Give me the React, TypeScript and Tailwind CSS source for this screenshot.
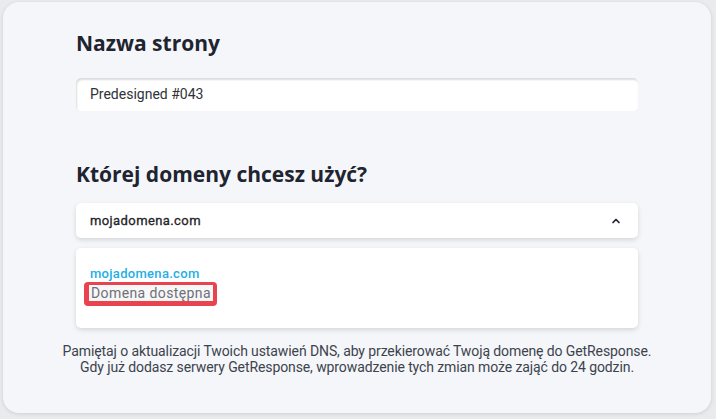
import { ChevronUp } from "lucide-react"

export default function App() {
  return (
    <div className="min-h-[419px] w-[716px] bg-[#e9ebef] pt-[2px] pl-[3px] pr-[5px] pb-[6px]">
      <div
        className="flex h-[411px] flex-col rounded-[16px] bg-[#f4f6f9] px-[73px] pt-[26px] shadow-[0_1px_4px_rgba(0,0,0,0.12)]"
        style={{ fontFamily: "Roboto, 'Liberation Sans', sans-serif" }}
      >
        <h1 className="font-['Open_Sans',sans-serif] text-[21px] font-bold leading-[30px] text-[#1e2430]">
          Nazwa strony
        </h1>

        <div className="mt-[20px] flex h-[33px] items-center rounded-[5px] bg-white px-[14px] text-[14px] text-[#2f3338] shadow-[inset_1px_2px_2px_rgba(0,0,0,0.14)]">
          Predesigned #043
        </div>

        <h2 className="mt-[48px] font-['Open_Sans',sans-serif] text-[21px] font-bold leading-[30px] text-[#1e2430]">
          Której domeny chcesz użyć?
        </h2>

        <div className="mt-[14px] flex h-[35px] items-center justify-between rounded-[5px] bg-white pl-[14px] pr-[16px] shadow-[0_2px_5px_rgba(0,0,0,0.13)]">
          <span className="text-[13px] tracking-[0.4px] text-[#1f2328] [-webkit-text-stroke:0.3px_#1f2328]">mojadomena.com</span>
          <ChevronUp className="h-[12px] w-[12px] text-[#1e2430]" strokeWidth={3.5} />
        </div>

        <div className="mt-[10px] h-[80px] rounded-[5px] bg-white px-[8px] pt-[19px] shadow-[0_2px_5px_rgba(0,0,0,0.13)]">
          <div className="pl-[6px] text-[13px] font-medium leading-[14px] tracking-[0.3px] text-[#23aee6]">
            mojadomena.com
          </div>
          <div className="inline-block rounded-[4px] bg-[#e8434f] pl-[5px] pr-[4px] pt-[3px] pb-[5px]">
            <span className="block bg-[#f7f7f7] px-[2px] text-[14px] leading-[16px] tracking-[0.4px] text-[#6d7178]">
              Domena dostępna
            </span>
          </div>
        </div>

        <p className="-mx-[30px] mt-[15px] whitespace-nowrap text-center text-[14px] leading-[16px] tracking-[-0.1px] text-[#3d434d]">
          Pamiętaj o aktualizacji Twoich ustawień DNS, aby przekierować Twoją domenę do GetResponse.
          <br />
          Gdy już dodasz serwery GetResponse, wprowadzenie tych zmian może zająć do 24 godzin.
        </p>
      </div>
    </div>
  )
}
